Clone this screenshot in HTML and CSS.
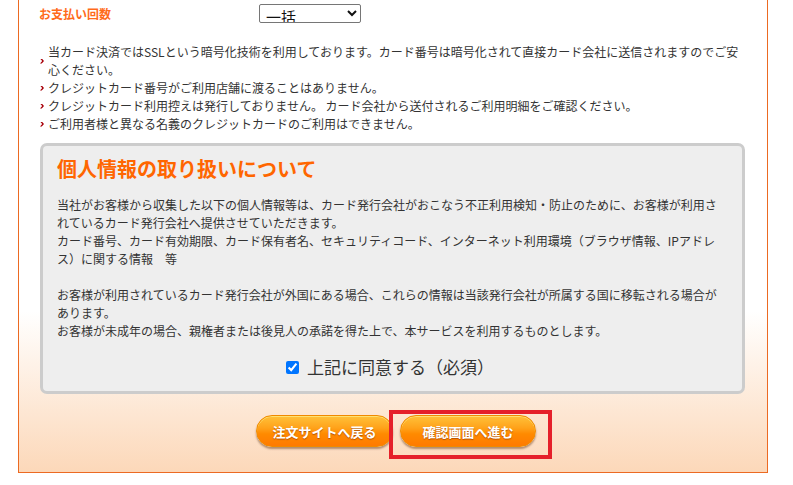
FILE: index.html
```html
<!DOCTYPE html>
<html lang="ja">
<head>
    <meta charset="UTF-8">
    <meta name="viewport" content="width=device-width, initial-scale=1.0">
    <title>クレジットカード決済</title>
    <link rel="stylesheet" href="styles.css">
</head>
<body>
    <div class="order-form">
        <div class="pay-row">
            <span class="pay-label">お支払い回数</span>
            <select class="pay-select">
                <option>一括</option>
                <option>分割</option>
                <option>リボ</option>
            </select>
        </div>

        <ul class="notes">
            <li>当カード決済ではSSLという暗号化技術を利用しております。カード番号は暗号化されて直接カード会社に送信されますのでご安心ください。</li>
            <li>クレジットカード番号がご利用店舗に渡ることはありません。</li>
            <li>クレジットカード利用控えは発行しておりません。 カード会社から送付されるご利用明細をご確認ください。</li>
            <li>ご利用者様と異なる名義のクレジットカードのご利用はできません。</li>
        </ul>

        <div class="privacy">
            <h2>個人情報の取り扱いについて</h2>
            <p>当社がお客様から収集した以下の個人情報等は、カード発行会社がおこなう不正利用検知・防止のために、お客様が利用されているカード発行会社へ提供させていただきます。<br>カード番号、カード有効期限、カード保有者名、セキュリティコード、インターネット利用環境（ブラウザ情報、IPアドレス）に関する情報　等</p>
            <p>お客様が利用されているカード発行会社が外国にある場合、これらの情報は当該発行会社が所属する国に移転される場合があります。<br>お客様が未成年の場合、親権者または後見人の承諾を得た上で、本サービスを利用するものとします。</p>
            <label class="agree">
                <input type="checkbox" checked>
                <span>上記に同意する（必須）</span>
            </label>
        </div>

        <div class="actions">
            <button type="button" class="btn">注文サイトへ戻る</button>
            <span class="btn-wrap">
                <button type="submit" class="btn">確認画面へ進む</button>
                <span class="mark"></span>
            </span>
        </div>
    </div>
</body>
</html>
```

FILE: styles.css
```css
body {
    margin: 0;
    background-color: #ffffff;
    color: #333333;
    font-family: "Noto Sans CJK JP", "Liberation Sans", sans-serif;
}
.order-form {
    width: 708px;
    margin-left: 18px;
    padding: 4px 20px 25px 20px;
    border: 1px solid #ec6a22;
    border-top: none;
    background: linear-gradient(to bottom, #ffffff 0, #ffffff 66%, #fcd8b9 100%);
}
.pay-row {
    display: flex;
    align-items: center;
    height: 19px;
}
.pay-label {
    width: 220px;
    font-size: 12px;
    font-weight: bold;
    color: #ff6a1a;
}
.pay-select {
    width: 102px;
    height: 19px;
    padding: 0 2px;
    border: 1px solid #767676;
    border-radius: 2px;
    background-color: #ffffff;
    color: #111111;
    font-family: inherit;
    font-size: 15px;
    line-height: 17px;
}
.notes {
    list-style: none;
    margin: 20px 0 10px;
    padding: 0 4px 0 0;
    font-size: 12px;
    line-height: 18px;
}
.notes li {
    display: flex;
    align-items: center;
}
.notes li::before {
    content: "";
    flex: none;
    width: 4px;
    height: 5px;
    margin: 0 4px 0 1px;
    background-color: #a8000a;
    clip-path: polygon(0 0, 45% 0, 100% 50%, 45% 100%, 0 100%, 55% 50%);
}
.privacy {
    margin: 0 2px 0 1px;
    padding: 9px 19px 12px 14px;
    border: 3px solid #cccccc;
    border-radius: 7px;
    background-color: #eeeeee;
}
.privacy h2 {
    margin: 0 0 13px;
    font-size: 20px;
    line-height: 28px;
    font-weight: bold;
    color: #ff6600;
}
.privacy p {
    margin: 0 0 18px;
    font-size: 12px;
    line-height: 18px;
}
.privacy p:last-of-type {
    margin-bottom: 15px;
}
.agree {
    display: flex;
    justify-content: center;
    align-items: center;
    gap: 8px;
    font-size: 17px;
    line-height: 24px;
    color: #333333;
}
.agree input {
    width: 13px;
    height: 13px;
    margin: 0;
}
.actions {
    display: flex;
    justify-content: center;
    gap: 7px;
    margin-top: 21px;
    padding-left: 6px;
}
.btn {
    width: 137px;
    height: 32px;
    padding: 0;
    border: 1px solid #f08a00;
    border-radius: 16px;
    background: linear-gradient(to bottom, #ffc13a 0, #ffa21a 40%, #ff8a00 60%, #ff7a00 100%);
    box-shadow: inset 0 1px 0 #ffe070, 0 2px 2px rgba(90, 40, 0, 0.45);
    color: #ffffff;
    font-family: inherit;
    font-size: 13px;
    font-weight: bold;
    text-shadow: 0 1px 1px rgba(150, 60, 0, 0.7);
    cursor: pointer;
}
.btn:hover {
    background: linear-gradient(to bottom, #ffcd55 0, #ff9a10 100%);
}
.btn-wrap {
    position: relative;
    display: inline-flex;
}
.btn-wrap .btn {
    width: 136px;
}
/* 赤枠の強調表示 */
.mark {
    position: absolute;
    left: -11px;
    right: -16px;
    top: -5px;
    bottom: -12px;
    border: 4px solid #e5202a;
    pointer-events: none;
}
```
